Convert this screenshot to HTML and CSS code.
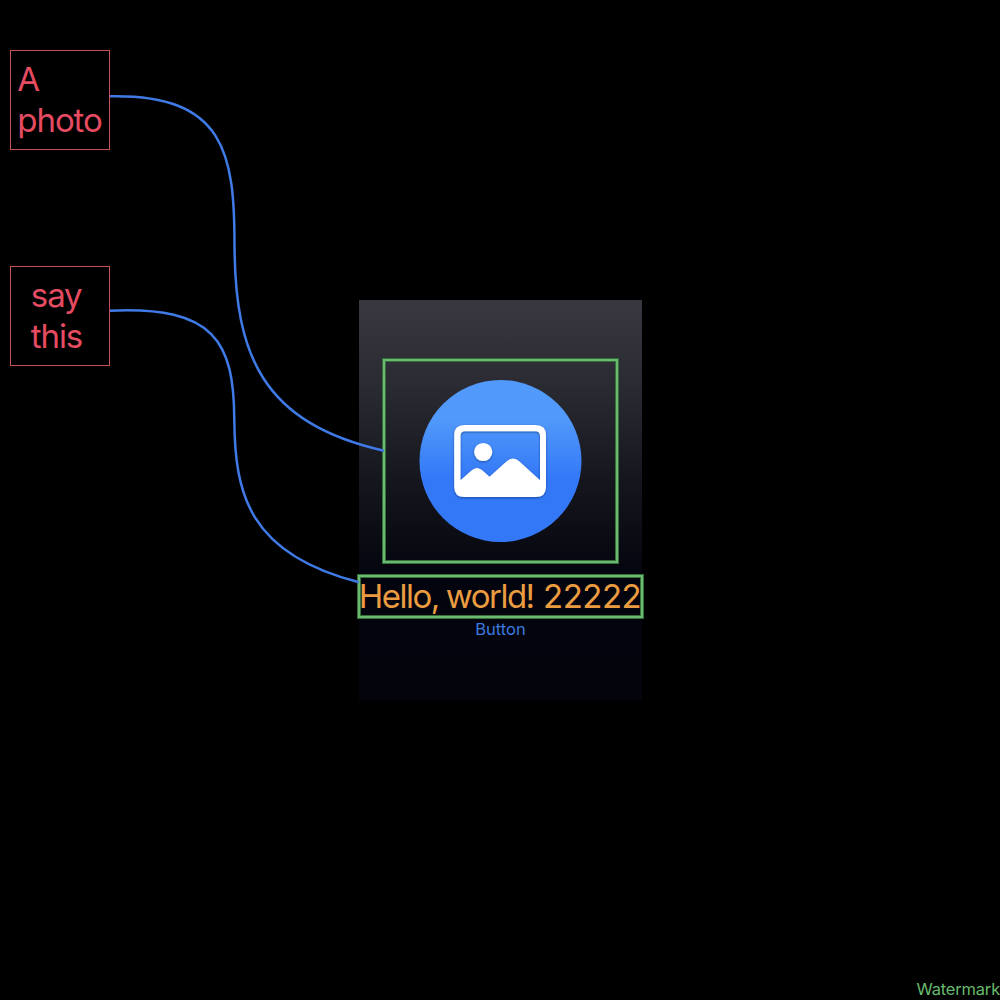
FILE: index.html
```html
<!DOCTYPE html>
<html lang="en">
<head>
<meta charset="utf-8">
<title>Canvas</title>
<link rel="stylesheet" href="styles.css">
</head>
<body>
<main class="canvas">
  <section class="card">
    <div class="picture frame">
      <svg class="badge" width="164" height="164" viewBox="0.5 0 164 164" aria-hidden="true">
        <defs>
          <linearGradient id="disc" x1="0" y1="0" x2="0" y2="1">
            <stop offset="0.24" stop-color="#5199fa"/>
            <stop offset="0.61" stop-color="#3378f7"/>
          </linearGradient>
          <filter id="soft" x="-10%" y="-10%" width="120%" height="125%">
            <feDropShadow dx="0" dy="1" stdDeviation="1" flood-color="#102a60" flood-opacity="0.6"/>
          </filter>
        </defs>
        <circle cx="82" cy="82" r="81" fill="url(#disc)"/>
        <g fill="#fff" filter="url(#soft)">
          <path fill-rule="evenodd" d="M46 46H117Q127.500 46 127.500 56V108Q127.500 118 117 118H46Q35.700 118 35.700 108V56Q35.700 46 46 46ZM46.500 52.200Q42 52.200 42 56.700V101.300L53 91.500Q58.500 86.500 64 91.500L71 97.800L88 82.400Q94.500 76.700 101 82.400L121.500 101.300V56.700Q121.500 52.200 117 52.200Z"/>
          <circle cx="64.700" cy="73" r="9.100"/>
        </g>
      </svg>
    </div>
    <div class="greeting frame"><span class="greeting-text">Hello, world! <span class="digits">22222</span></span></div>
    <div class="action">Button</div>
  </section>
  <svg class="links" width="1000" height="1000" viewBox="0 0 1000 1000" aria-hidden="true">
    <path d="M110 96.300C225 94 234.500 154 234.500 245C235 355 262 423 384 450.700"/>
    <path d="M110 310.700C215 306 234 342 234.300 420C235 493 248 554 359 582.300"/>
  </svg>
  <div class="node node-photo"><span>A<br>photo</span></div>
  <div class="node node-say"><span>say<br>this</span></div>
  <div class="watermark">Watermark</div>
</main>
</body>
</html>
```
FILE: styles.css
```css
body {
  margin: 0;
  background: #000;
  font-family: Inter, "Liberation Sans", sans-serif;
}

.canvas {
  position: relative;
  display: flex;
  align-items: center;
  justify-content: center;
  width: 1000px;
  height: 1000px;
  overflow: hidden;
}

.card {
  box-sizing: border-box;
  display: flex;
  flex-direction: column;
  align-items: center;
  width: 283px;
  height: 400px;
  margin-left: 1px;
  padding-top: 58px;
  background: linear-gradient(#393841 0%, #2a2a32 22%, #15151d 46%, #04040e 70%, #04040d 100%);
}

.frame {
  box-sizing: border-box;
  border: 1px solid #35703a;
  box-shadow: inset 0 0 0 2px #6abb70, inset 0 0 0 3px #35703a;
}

.picture {
  display: flex;
  align-items: center;
  justify-content: center;
  width: 237px;
  height: 206px;
}

.badge {
  flex: none;
}

.greeting {
  display: flex;
  align-items: center;
  justify-content: center;
  width: 287px;
  height: 45px;
  margin-top: 10px;
}

.greeting-text {
  flex: none;
  margin-right: 1px;
  color: #eb9c40;
  font-size: 33px;
  line-height: 41px;
  letter-spacing: -1.5px;
  word-spacing: -0.8px;
  white-space: nowrap;
}

.digits {
  margin-left: 2.500px;
  letter-spacing: -0.500px;
}

.action {
  color: #3b7ae0;
  font-size: 16.500px;
  line-height: 21px;
}

.links {
  position: absolute;
  left: 0;
  top: 0;
  fill: none;
  stroke: #3f7ae6;
  stroke-width: 2.500;
}

.node {
  position: absolute;
  left: 10px;
  box-sizing: border-box;
  display: flex;
  align-items: center;
  justify-content: center;
  width: 100px;
  height: 100px;
  border: 1px solid #c9505a;
  color: #e54b61;
  font-size: 33px;
  line-height: 41px;
  letter-spacing: -1.1px;
}

.node-photo {
  top: 50px;
  padding-right: 1px;
}

.node-say {
  top: 266px;
  padding-right: 7px;
}

.watermark {
  position: absolute;
  right: 0;
  bottom: 0;
  color: #67b96c;
  font-size: 16.500px;
  line-height: 21px;
  letter-spacing: -0.2px;
}
```
